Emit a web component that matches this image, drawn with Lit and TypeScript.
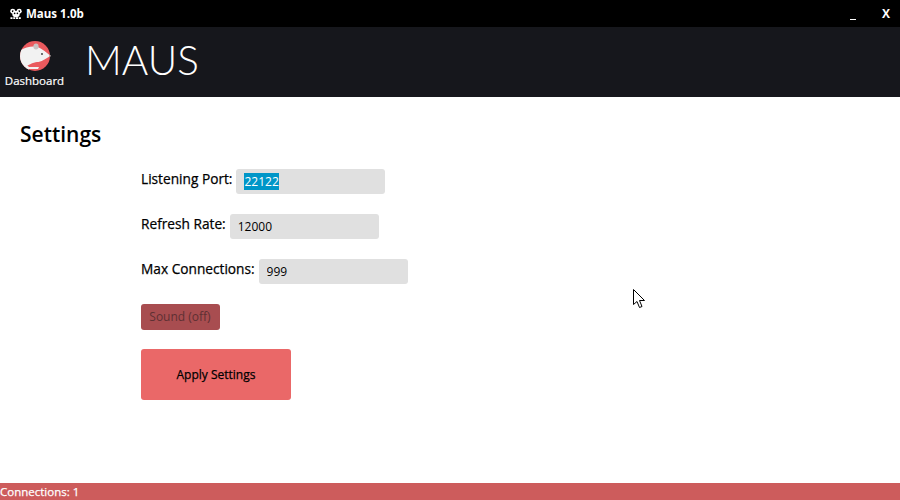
import { LitElement, html, css } from "lit";
import { customElement } from "lit/decorators.js";

@customElement("app-root")
export class AppRoot extends LitElement {
  static styles = css`
    :host { display: flex; flex-direction: column; position: relative; width: 900px; height: 500px; overflow: hidden; background: #fff; font-family: "Open Sans", "Noto Sans", sans-serif; color: #000; }
    .titlebar { height: 27px; flex: none; background: #000; color: #fff; display: flex; align-items: center; padding: 0 9px 0 10px; font-size: 11.5px; font-weight: 700; }
    .title { display: flex; align-items: center; gap: 4px; flex: 1; }
    .controls { display: flex; gap: 25px; align-items: center; }
    .min { width: 6px; height: 1px; background: #fff; margin-top: 11px; }
    .close { font-size: 12px; width: 10px; text-align: center; }
    .header { height: 70px; flex: none; background: #16171c; display: flex; align-items: flex-start; color: #fff; }
    .nav { width: 69px; display: flex; flex-direction: column; align-items: center; font-size: 11.5px; font-weight: 500; line-height: 16px; padding-top: 14px; -webkit-text-stroke: 0.2px #fff; }
    .nav svg { display: block; margin-bottom: 2px; }
    .logo { font-family: "Lato", sans-serif; font-weight: 300; font-size: 40.5px; line-height: 66px; margin-left: 16px; }
    .main { flex: 1; padding: 23px 20px 0; }
    h1 { margin: 0; font-size: 21px; line-height: 28px; font-weight: 600; }
    .form { display: flex; flex-direction: column; align-items: flex-start; margin: 21px 0 0 121px; }
    .row { display: flex; align-items: center; gap: 4px; height: 25px; margin-bottom: 20px; font-size: 13.7px; font-weight: 500; }
    .row label { position: relative; top: -3px; -webkit-text-stroke: 0.25px #000; }
    input { box-sizing: border-box; width: 149px; height: 25px; border: 0; outline: 0; border-radius: 3px; background: #e0e0e0; padding: 0 8px; font: 12px "Open Sans", "Noto Sans", sans-serif; color: #000; }
    input::selection { background: #0096c8; color: #fff; }
    .sound { box-sizing: border-box; width: 79px; height: 26px; border: 0; border-radius: 3px; background: #a84d50; color: #5e3033; font: 12px "Open Sans", "Noto Sans", sans-serif; padding: 0 1px 2px 0; margin-bottom: 19px; }
    .apply { box-sizing: border-box; width: 150px; height: 51px; border: 0; border-radius: 3px; background: #ea6868; color: #000; font: 500 12px "Open Sans", "Noto Sans", sans-serif; padding: 0; -webkit-text-stroke: 0.25px #000; }
    .status { height: 17px; flex: none; background: #cd5c5c; color: #fff; font-size: 11.5px; font-weight: 500; line-height: 17px; -webkit-text-stroke: 0.25px #fff; }
    .cursor { position: absolute; left: 633px; top: 289px; display: block; }
  `;

  firstUpdated() {
    const i = this.renderRoot.querySelector<HTMLInputElement>("#port");
    if (i) { i.focus(); i.select(); }
  }

  render() {
    return html`
      <div class="titlebar">
        <div class="title">
          <svg width="12" height="12" viewBox="0 0 13 12">
            <circle cx="3" cy="3" r="2.7" fill="#fff"/><circle cx="10" cy="3" r="2.7" fill="#fff"/>
            <circle cx="3" cy="3" r="1" fill="#000"/><circle cx="10" cy="3" r="1" fill="#000"/>
            <ellipse cx="6.5" cy="6" rx="4" ry="3.6" fill="#fff"/>
            <circle cx="5" cy="5.4" r="0.9" fill="#000"/><circle cx="8" cy="5.4" r="0.9" fill="#000"/>
            <path d="M0.5 10.5h12" stroke="#fff" stroke-width="2" stroke-dasharray="2.2 0.8"/>
          </svg>
          <span>Maus 1.0b</span>
        </div>
        <div class="controls"><div class="min"></div><div class="close">X</div></div>
      </div>
      <div class="header">
        <div class="nav">
          <svg width="32" height="30" viewBox="0 0 32 30">
            <defs><clipPath id="c"><circle cx="16" cy="15" r="15"/></clipPath></defs>
            <circle cx="16" cy="15" r="15" fill="#ea5a5e"/>
            <g clip-path="url(#c)">
              <path d="M0 10 C5 7 11 5 16 5.5 C21 6 27 11 31.5 14.7 C29 16.5 26.5 18 24.5 19 C22 20.5 20 21 18 21 C14 21.5 9 24 0 29 Z" fill="#f2f2f2"/>
              <path d="M10 26 H20 L19 28 L10 28 Z" fill="#f2f2f2"/>
              <path d="M0 29 L8 24 L10 26 V32 H0 Z" fill="#f2f2f2"/>
              <ellipse cx="17" cy="5.5" rx="2.6" ry="3" fill="#c9c3c3"/>
              <circle cx="23" cy="13" r="0.9" fill="#333"/>
            </g>
            <circle cx="31.2" cy="14.8" r="0.9" fill="#8a7f7f"/>
          </svg>
          <span>Dashboard</span>
        </div>
        <div class="logo">MAUS</div>
      </div>
      <div class="main">
        <h1>Settings</h1>
        <div class="form">
          <div class="row"><label>Listening Port:</label><input id="port" .value=${"22122"} /></div>
          <div class="row"><label>Refresh Rate:</label><input .value=${"12000"} /></div>
          <div class="row"><label>Max Connections:</label><input .value=${"999"} /></div>
          <button class="sound">Sound (off)</button>
          <button class="apply">Apply Settings</button>
        </div>
      </div>
      <div class="status">Connections: 1</div>
      <svg class="cursor" width="13" height="20" viewBox="0 0 13 20">
        <path d="M0.5 0.5 V15.5 L4 12.5 L6.5 18.5 L9 17.5 L6.5 11.5 H11.5 Z" fill="#fff" stroke="#000" stroke-width="1"/>
      </svg>
    `;
  }
}
